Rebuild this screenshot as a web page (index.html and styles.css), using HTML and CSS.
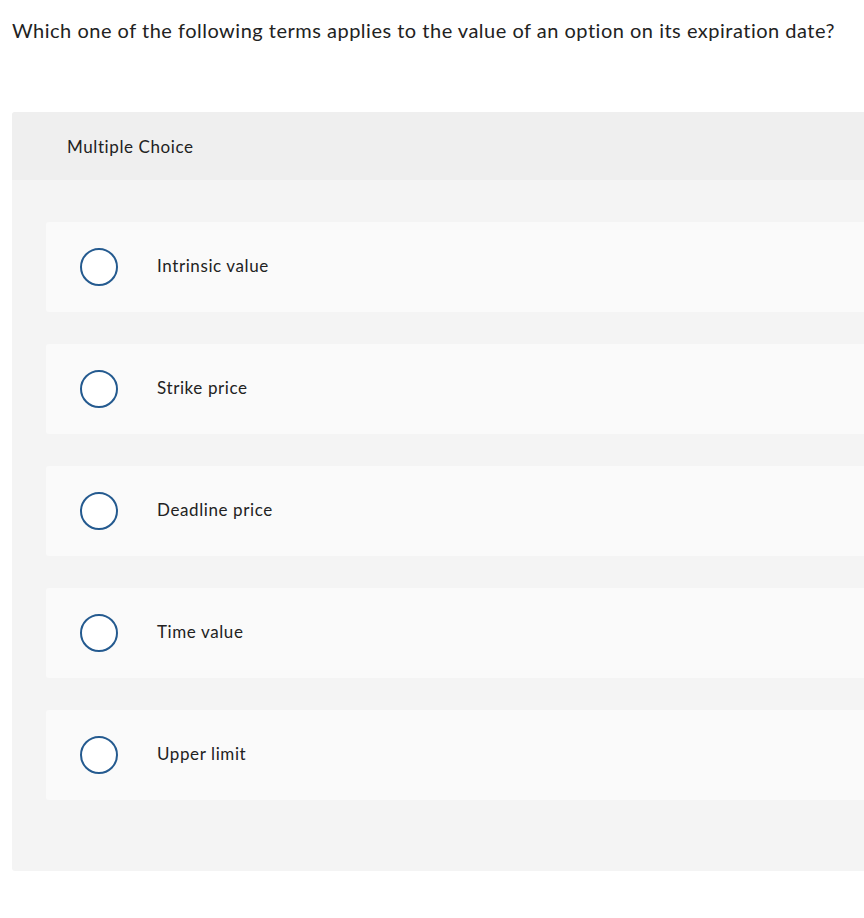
FILE: index.html
```html
<!DOCTYPE html>
<html>
<head>
<meta charset="utf-8">
<link rel="stylesheet" href="styles.css">
</head>
<body>
<p class="question">Which one of the following terms applies to the value of an option on its expiration date?</p>
<div class="panel">
  <div class="panel-head">Multiple Choice</div>
  <div class="options">
    <div class="option"><span class="radio"></span><span class="label">Intrinsic value</span></div>
    <div class="option"><span class="radio"></span><span class="label">Strike price</span></div>
    <div class="option"><span class="radio"></span><span class="label">Deadline price</span></div>
    <div class="option"><span class="radio"></span><span class="label">Time value</span></div>
    <div class="option"><span class="radio"></span><span class="label">Upper limit</span></div>
  </div>
</div>
</body>
</html>
```
FILE: styles.css
```css
html, body {
  margin: 0;
  padding: 0;
  background: #fff;
  overflow-x: hidden;
}
body {
  font-family: Lato, "Liberation Sans", sans-serif;
  color: #222;
}
.question {
  margin: 0;
  padding: 18px 0 0 12px;
  font-size: 20px;
  letter-spacing: 0.5px;
  line-height: 24px;
  height: 112px;
  box-sizing: border-box;
}
.panel {
  margin-left: 12px;
  margin-right: -20px;
  border-radius: 3px;
  background: #f4f4f4;
  overflow: hidden;
}
.panel-head {
  height: 68px;
  background: #efefef;
  padding-left: 55px;
  display: flex;
  align-items: center;
  font-size: 17px;
  letter-spacing: 0.6px;
}
.options {
  padding: 42px 0 71px 34px;
  display: flex;
  flex-direction: column;
  gap: 32px;
}
.option {
  height: 90px;
  background: #fafafa;
  border-radius: 3px;
  display: flex;
  align-items: center;
  padding-left: 34px;
}
.radio {
  width: 38px;
  height: 38px;
  box-sizing: border-box;
  border: 2px solid #245a8f;
  border-radius: 50%;
  background: #fff;
  flex: none;
}
.label {
  margin-left: 39px;
  margin-bottom: 3px;
  font-size: 17px;
  letter-spacing: 0.6px;
}
```
